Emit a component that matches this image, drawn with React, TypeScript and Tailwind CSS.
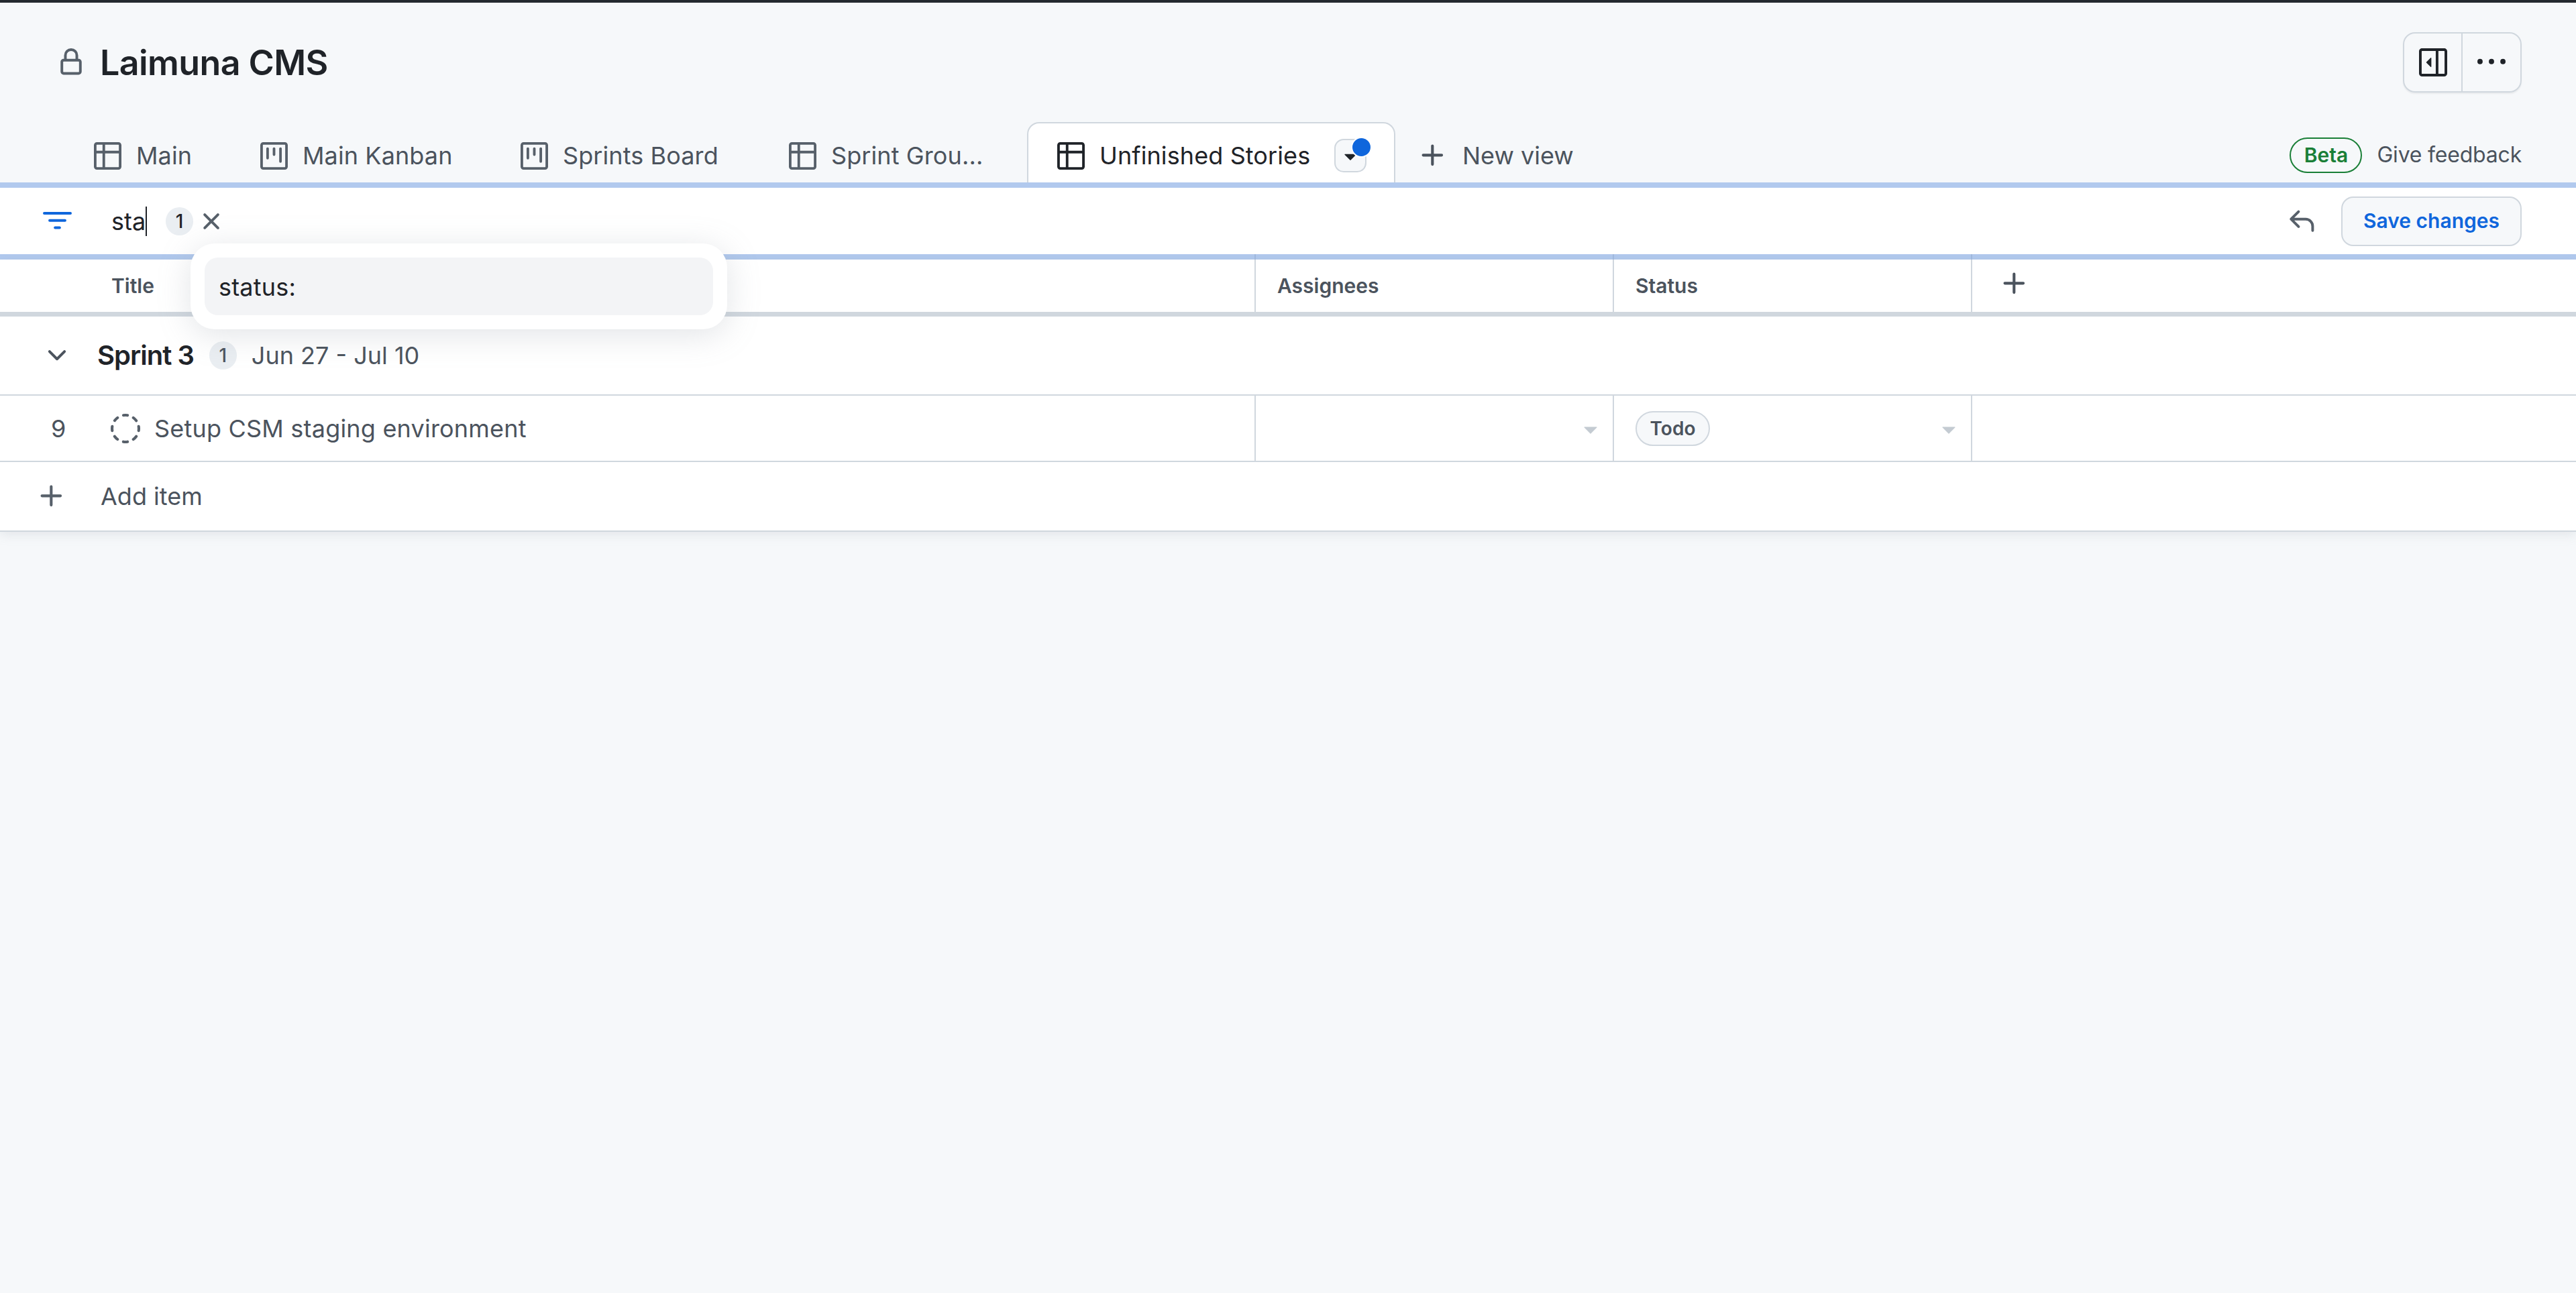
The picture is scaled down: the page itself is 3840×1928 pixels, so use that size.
// Octicons, 16px grid
const paths = {
  lock: 'M4 4a4 4 0 0 1 8 0v2h.25c.966 0 1.75.784 1.75 1.75v5.5A1.75 1.75 0 0 1 12.25 15h-8.5A1.75 1.75 0 0 1 2 13.25v-5.5C2 6.784 2.784 6 3.75 6H4Zm8.25 3.5h-8.5a.25.25 0 0 0-.25.25v5.5c0 .138.112.25.25.25h8.5a.25.25 0 0 0 .25-.25v-5.5a.25.25 0 0 0-.25-.25ZM10.5 6V4a2.5 2.5 0 1 0-5 0v2Z',
  table: 'M0 1.75C0 .784.784 0 1.75 0h12.5C15.216 0 16 .784 16 1.75v12.5A1.75 1.75 0 0 1 14.25 16H1.75A1.75 1.75 0 0 1 0 14.25ZM6.5 6.5v8h7.75a.25.25 0 0 0 .25-.25V6.5Zm8-1.5V1.75a.25.25 0 0 0-.25-.25H6.5V5Zm-13 1.5v7.75c0 .138.112.25.25.25H5v-8ZM5 5V1.5H1.75a.25.25 0 0 0-.25.25V5Z',
  project: 'M1.75 0h12.5C15.216 0 16 .784 16 1.75v12.5A1.75 1.75 0 0 1 14.25 16H1.75A1.75 1.75 0 0 1 0 14.25V1.75C0 .784.784 0 1.75 0ZM1.5 1.75v12.5c0 .138.112.25.25.25h12.5a.25.25 0 0 0 .25-.25V1.75a.25.25 0 0 0-.25-.25H1.75a.25.25 0 0 0-.25.25ZM11.75 3a.75.75 0 0 1 .75.75v7.5a.75.75 0 0 1-1.5 0v-7.5a.75.75 0 0 1 .75-.75Zm-8.25.75a.75.75 0 0 1 1.5 0v5.5a.75.75 0 0 1-1.5 0ZM8 3a.75.75 0 0 1 .75.75v3.5a.75.75 0 0 1-1.5 0v-3.5A.75.75 0 0 1 8 3Z',
  plus: 'M7.75 2a.75.75 0 0 1 .75.75V7h4.25a.75.75 0 0 1 0 1.5H8.5v4.25a.75.75 0 0 1-1.5 0V8.5H2.75a.75.75 0 0 1 0-1.5H7V2.75A.75.75 0 0 1 7.75 2Z',
  filter: 'M.75 3h14.5a.75.75 0 0 1 0 1.5H.75a.75.75 0 0 1 0-1.5ZM3 7.75A.75.75 0 0 1 3.75 7h8.5a.75.75 0 0 1 0 1.5h-8.5A.75.75 0 0 1 3 7.75Zm3 4a.75.75 0 0 1 .75-.75h2.5a.75.75 0 0 1 0 1.5h-2.5a.75.75 0 0 1-.75-.75Z',
  x: 'M3.72 3.72a.75.75 0 0 1 1.06 0L8 6.94l3.22-3.22a.749.749 0 0 1 1.275.326.749.749 0 0 1-.215.734L9.06 8l3.22 3.22a.749.749 0 0 1-.326 1.275.749.749 0 0 1-.734-.215L8 9.06l-3.22 3.22a.751.751 0 0 1-1.042-.018.751.751 0 0 1-.018-1.042L6.94 8 3.72 4.78a.75.75 0 0 1 0-1.06Z',
  chevron: 'M12.78 5.22a.749.749 0 0 1 0 1.06l-4.25 4.25a.749.749 0 0 1-1.06 0L3.22 6.28a.749.749 0 1 1 1.06-1.06L8 8.939l3.72-3.719a.749.749 0 0 1 1.06 0Z',
  sidebar: 'm4.177 7.823 2.396-2.396A.25.25 0 0 1 7 5.604v4.792a.25.25 0 0 1-.427.177L4.177 8.177a.25.25 0 0 1 0-.354ZM0 1.75C0 .784.784 0 1.75 0h12.5C15.216 0 16 .784 16 1.75v12.5A1.75 1.75 0 0 1 14.25 16H1.75A1.75 1.75 0 0 1 0 14.25Zm1.75-.25a.25.25 0 0 0-.25.25v12.5c0 .138.112.25.25.25H9.5v-13Zm12.5 13a.25.25 0 0 0 .25-.25V1.75a.25.25 0 0 0-.25-.25H11v13Z',
  kebab: 'M8 9a1.5 1.5 0 1 0 0-3 1.5 1.5 0 0 0 0 3ZM1.5 9a1.5 1.5 0 1 0 0-3 1.5 1.5 0 0 0 0 3Zm13 0a1.5 1.5 0 1 0 0-3 1.5 1.5 0 0 0 0 3Z',
  reply: 'M6.78 1.97a.75.75 0 0 1 0 1.06L3.81 6h6.44A4.75 4.75 0 0 1 15 10.75v2.5a.75.75 0 0 1-1.5 0v-2.5a3.25 3.25 0 0 0-3.25-3.25H3.81l2.97 2.97a.749.749 0 0 1-.326 1.275.749.749 0 0 1-.734-.215L1.47 7.28a.75.75 0 0 1 0-1.06l4.25-4.25a.75.75 0 0 1 1.06 0Z',
  caret: 'm4.427 7.427 3.396 3.396a.25.25 0 0 0 .354 0l3.396-3.396A.25.25 0 0 0 11.396 7H4.604a.25.25 0 0 0-.177.427Z',
  draft: 'M14.307 11.655a.75.75 0 0 1 .165 1.048 8.05 8.05 0 0 1-1.769 1.77.75.75 0 0 1-.883-1.214 6.552 6.552 0 0 0 1.44-1.439.75.75 0 0 1 1.047-.165Zm-2.652-9.962a.75.75 0 0 1 1.048-.165 8.05 8.05 0 0 1 1.77 1.769.75.75 0 0 1-1.214.883 6.552 6.552 0 0 0-1.439-1.44.75.75 0 0 1-.165-1.047ZM6.749.097a8.074 8.074 0 0 1 2.502 0 .75.75 0 1 1-.233 1.482 6.558 6.558 0 0 0-2.036 0A.751.751 0 0 1 6.749.097ZM.955 6.125a.75.75 0 0 1 .624.857 6.558 6.558 0 0 0 0 2.036.75.75 0 1 1-1.482.233 8.074 8.074 0 0 1 0-2.502.75.75 0 0 1 .858-.624Zm14.09 0a.75.75 0 0 1 .858.624c.13.829.13 1.673 0 2.502a.75.75 0 1 1-1.482-.233 6.558 6.558 0 0 0 0-2.036.75.75 0 0 1 .624-.857Zm-8.92 8.92a.75.75 0 0 1 .857-.624 6.558 6.558 0 0 0 2.036 0 .75.75 0 1 1 .233 1.482c-.829.13-1.673.13-2.502 0a.75.75 0 0 1-.624-.858Zm-4.432-3.39a.75.75 0 0 1 1.048.165 6.552 6.552 0 0 0 1.439 1.44.751.751 0 0 1-.883 1.212 8.05 8.05 0 0 1-1.77-1.769.75.75 0 0 1 .166-1.048Zm2.652-9.962A.75.75 0 0 1 4.18 2.74a6.556 6.556 0 0 0-1.44 1.44.751.751 0 0 1-1.212-.883 8.05 8.05 0 0 1 1.769-1.77.75.75 0 0 1 1.048.166Z',
};

function Icon({ name, className }: { name: keyof typeof paths; className: string }) {
  return (
    <svg viewBox="0 0 16 16" fill="currentColor" className={`shrink-0 ${className}`}>
      <path d={paths[name]} />
    </svg>
  );
}

const tabs: { label: string; icon: keyof typeof paths; width: string }[] = [
  { label: 'Main', icon: 'table', width: 'w-[248px]' },
  { label: 'Main Kanban', icon: 'project', width: 'w-[388px]' },
  { label: 'Sprints Board', icon: 'project', width: 'w-[400px]' },
  { label: 'Sprint Grou...', icon: 'table', width: 'w-[355px]' },
];

function Count({ className }: { className: string }) {
  return (
    <span className={`flex h-[42px] w-[41px] items-center justify-center rounded-full bg-[#eaeef2] text-[28px] font-medium ${className}`}>1</span>
  );
}

export default function App() {
  return (
    <div className="min-h-screen bg-[#f6f8fa] font-['Inter',sans-serif] text-[#4b535d]">
      <div className="h-[4px] bg-[#24292f]" />

      {/* Title */}
      <div className="flex h-[178px] items-center justify-between pl-[85px] pr-[81px]">
        <div className="flex items-center gap-[22px]">
          <Icon name="lock" className="h-[42px] w-[42px] text-[#57606a]" />
          <h1 className="pt-[2px] text-[52px] font-semibold tracking-[-0.6px] text-[#1f2328]">Laimuna CMS</h1>
        </div>
        <div className="flex h-[90px] w-[177px] rounded-[18px] border-2 border-[#d0d7de] shadow-[0_2px_2px_rgba(31,35,40,0.06)]">
          <div className="flex w-[87px] items-center justify-center border-r-2 border-[#d0d7de]">
            <Icon name="sidebar" className="h-[42px] w-[42px] text-[#1f2328]" />
          </div>
          <div className="flex flex-1 items-center justify-center">
            <Icon name="kebab" className="h-[42px] w-[42px] text-[#1f2328]" />
          </div>
        </div>
      </div>

      {/* Views */}
      <div className="flex h-[90px] items-stretch justify-between pr-[81px]">
        <div className="flex items-stretch pl-[140px]">
          {tabs.map(({ label, icon, width }) => (
            <div key={label} className={`flex items-center gap-[22px] pt-[10px] text-[36px] tracking-[0.1px] ${width}`}>
              <Icon name={icon} className="h-[41px] w-[41px] text-[#57606a]" />
              <span>{label}</span>
            </div>
          ))}
          <div className="flex w-[549px] items-center rounded-t-[18px] border-x-2 border-t-2 border-[#d0d7de] bg-white pl-[43px] pt-[8px] text-[36px] text-[#1f2328]">
            <Icon name="table" className="h-[41px] w-[41px]" />
            <span className="ml-[22px] tracking-[0.1px]">Unfinished Stories</span>
            <div className="relative ml-[36px] flex h-[50px] w-[48px] items-center justify-center rounded-[14px] border-2 border-[#d0d7de] bg-[#f6f8fa]">
              <Icon name="caret" className="h-[38px] w-[38px]" />
              <span className="absolute right-[-10px] top-[-5px] h-[31px] w-[31px] rounded-full border-2 border-white bg-[#0f66dc]" />
            </div>
          </div>
          <div className="ml-[34px] flex items-center pt-[10px] text-[36px]">
            <Icon name="plus" className="h-[44px] w-[44px]" />
            <span className="ml-[22px]">New view</span>
          </div>
        </div>
        <div className="flex items-center gap-[22px] pt-[8px]">
          <span className="flex h-[53px] w-[108px] items-center justify-center rounded-full border-2 border-[#1a7f37] text-[30px] font-semibold text-[#1a7f37]">Beta</span>
          <span className="text-[32px] tracking-[-0.2px]">Give feedback</span>
        </div>
      </div>
      <div className="h-[8px] bg-[#b1c9ee]" />

      {/* Filter */}
      <div className="relative flex h-[99px] items-center bg-white pl-[64px] pr-[81px]">
        <Icon name="filter" className="h-[43px] w-[43px] text-[#0f66dc]" />
        <div className="ml-[59px] flex items-center">
          <span className="border-r-2 border-[#1f2328] text-[36px] leading-[44px] text-[#1f2328]">sta</span>
          <Count className="ml-[28px] text-[#1f2328]" />
          <Icon name="x" className="ml-[6px] h-[42px] w-[42px] text-[#57606a]" />
        </div>
        <div className="ml-auto flex items-center gap-[38px]">
          <Icon name="reply" className="h-[42px] w-[42px] text-[#57606a]" />
          <button className="flex h-[74px] w-[269px] items-center justify-center rounded-[18px] border-2 border-[#d0d7de] bg-[#f6f8fa] text-[30px] font-semibold text-[#0f66dc]">Save changes</button>
        </div>
        <div className="absolute left-[284px] top-[83px] z-10 w-[800px] rounded-[36px] bg-white p-[21px] shadow-[0_8px_48px_rgba(140,149,159,0.25)]">
          <div className="flex h-[86px] items-center rounded-[20px] bg-[#f3f4f6] pl-[21px] pt-[2px] text-[36px] tracking-[0.2px] text-[#1f2328]">status:</div>
        </div>
      </div>
      <div className="flex h-[8px] bg-[#b1c9ee]">
        <div className="w-[1870px]" />
        <div className="w-[534px] border-l-2 border-[#9fb8dd]" />
        <div className="w-[534px] border-l-2 border-[#9fb8dd]" />
        <div className="flex-1 border-l-2 border-[#9fb8dd]" />
      </div>

      {/* Table */}
      <div className="bg-white shadow-[0_4px_16px_rgba(140,149,159,0.18)]">
        <div className="flex h-[78px] text-[30px] font-semibold">
          <div className="flex w-[1870px] items-center pl-[166px]">Title</div>
          <div className="flex w-[534px] items-center border-l-2 border-[#d0d7de] pl-[32px]">Assignees</div>
          <div className="flex w-[534px] items-center border-l-2 border-[#d0d7de] pl-[32px]">Status</div>
          <div className="flex flex-1 items-center border-l-2 border-[#d0d7de] pb-[6px] pl-[41px]">
            <Icon name="plus" className="h-[44px] w-[44px]" />
          </div>
        </div>
        <div className="h-[7px] bg-[#d0d7de]" />

        <div className="flex h-[116px] items-center pl-[64px] text-[36px]">
          <Icon name="chevron" className="h-[42px] w-[42px]" />
          <span className="ml-[39px] text-[40px] font-semibold tracking-[-1px] text-[#1f2328]">Sprint 3</span>
          <Count className="ml-[23px]" />
          <span className="ml-[22px]">Jun 27 - Jul 10</span>
        </div>

        <div className="flex h-[101px] border-y-2 border-[#d0d7de] text-[36px]">
          <div className="flex w-[1870px] items-center">
            <span className="w-[165px] pl-[76px]">9</span>
            <Icon name="draft" className="h-[44px] w-[44px] text-[#57606a]" />
            <span className="ml-[21px] tracking-[0.2px]">Setup CSM staging environment</span>
          </div>
          <div className="flex w-[534px] items-center justify-end border-l-2 border-[#d0d7de] pr-[12px]">
            <Icon name="caret" className="h-[42px] w-[42px] text-[#c4cbd2]" />
          </div>
          <div className="flex w-[534px] items-center justify-between border-l-2 border-[#d0d7de] pl-[32px] pr-[12px]">
            <span className="flex h-[52px] w-[111px] items-center justify-center rounded-full border-2 border-[#d0d7de] bg-[#f6f8fa] text-[28px] font-semibold">Todo</span>
            <Icon name="caret" className="h-[42px] w-[42px] text-[#c4cbd2]" />
          </div>
          <div className="flex-1 border-l-2 border-[#d0d7de]" />
        </div>

        <div className="flex h-[104px] items-center border-b-2 border-[#d0d7de] pl-[55px] text-[36px]">
          <Icon name="plus" className="h-[44px] w-[44px] text-[#57606a]" />
          <span className="ml-[51px]">Add item</span>
        </div>
      </div>
    </div>
  );
}
